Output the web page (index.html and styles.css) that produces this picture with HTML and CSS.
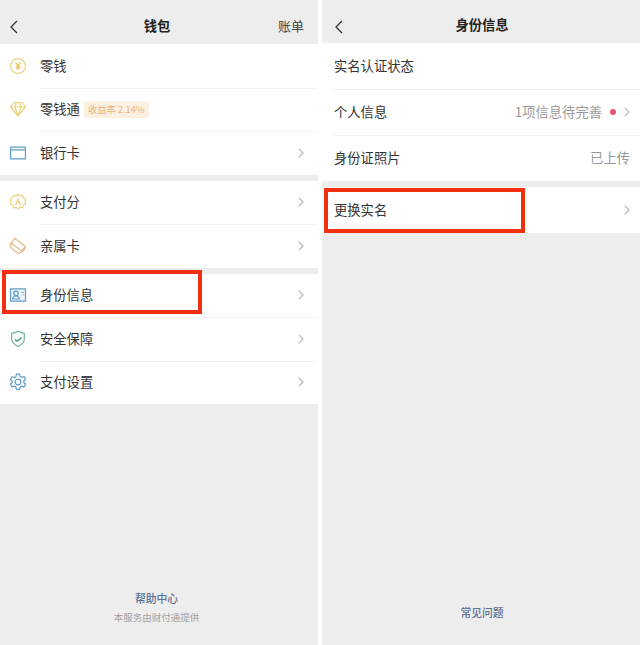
FILE: index.html
```html
<!DOCTYPE html>
<html lang="zh-CN">
<head>
<meta charset="utf-8">
<title>钱包 / 身份信息</title>
<link rel="stylesheet" href="styles.css">
</head>
<body>
<div class="screens">
  <section class="screen">
    <header class="nav nav-left">
      <svg class="back" viewBox="0 0 8 14"><path d="M7 1 1 7l6 6"/></svg>
      <h1 class="nav-title">钱包</h1>
      <span class="nav-action">账单</span>
    </header>
    <div class="group">
      <div class="row">
        <svg class="icon" viewBox="0 0 18 18"><circle class="yellow" cx="9" cy="9" r="7.400"/><path class="yellow-strong" d="M6.600 5.300 9 8.600l2.400-3.300M9 8.600v4.100M6.600 9.200h4.800M6.600 11h4.800"/></svg>
        <span class="label">零钱</span>
      </div>
      <div class="row">
        <svg class="icon" viewBox="0 0 18 18"><path class="yellow" d="M5 2.500h8L16.500 7 9 16 1.500 7zM1.500 7h15M5.800 7 9 16l3.200-9M5.800 7 7.500 2.500M12.200 7 10.500 2.500"/></svg>
        <span class="label">零钱通</span>
        <span class="badge">收益率 2.14%</span>
      </div>
      <div class="row">
        <svg class="icon" viewBox="0 0 18 18"><path class="blue" d="M1.600 3.200h14.800v11.600H1.600zM1.600 5.800h14.800"/></svg>
        <span class="label">银行卡</span>
        <svg class="chevron" viewBox="0 0 6 10"><path d="m.7.700 4.300 4.300-4.300 4.300"/></svg>
      </div>
    </div>
    <div class="group">
      <div class="row">
        <svg class="icon" viewBox="0 0 18 18"><path class="yellow" d="M9 1.200 11 2.700l2.500-.3 1 2.300 2.200 1.300-.6 2.500.6 2.500-2.200 1.300-1 2.300-2.500-.3-2 1.500-2-1.500-2.500.3-1-2.300-2.200-1.300.6-2.500-.6-2.500 2.200-1.300 1-2.300 2.500.3z"/><path class="yellow" d="m6.500 12.200 2.500-6.500 2.500 6.500M7.400 10h3.200"/></svg>
        <span class="label">支付分</span>
        <svg class="chevron" viewBox="0 0 6 10"><path d="m.7.700 4.300 4.300-4.300 4.300"/></svg>
      </div>
      <div class="row">
        <svg class="icon" viewBox="0 0 18 18"><path class="orange" d="M6 1.500 16.500 9.500 12.500 14 2 6zM2 6 1.200 8.800c0 1 .8 2.200 1.800 3l6 4.500c1.500 0 3-.5 4-1.500l3.500-3.500"/></svg>
        <span class="label">亲属卡</span>
        <svg class="chevron" viewBox="0 0 6 10"><path d="m.7.700 4.300 4.300-4.300 4.300"/></svg>
      </div>
    </div>
    <div class="group">
      <div class="row">
        <svg class="icon" viewBox="0 0 18 18"><path class="blue tint" d="M1.500 2.800h15v12.400h-15z"/><circle class="blue" cx="7" cy="7.400" r="2.300"/><path class="blue" d="M3.500 13c.3-2 1.700-3 3.500-3s3.200 1 3.500 3zM12.500 6.500h2.200M13.500 9h1.200"/></svg>
        <span class="label">身份信息</span>
        <svg class="chevron" viewBox="0 0 6 10"><path d="m.7.700 4.300 4.300-4.300 4.300"/></svg>
        <span class="highlight"></span>
      </div>
      <div class="row">
        <svg class="icon" viewBox="0 0 18 18"><path class="green" d="M9 1.300c2 1.300 4 1.900 6.300 2v6c0 3.400-2.900 5.600-6.300 7.200-3.400-1.600-6.300-3.800-6.300-7.200v-6c2.300-.1 4.300-.7 6.300-2z"/><path class="green-strong" d="m5.800 9.200 2.400 2L12.600 7.600"/></svg>
        <span class="label">安全保障</span>
        <svg class="chevron" viewBox="0 0 6 10"><path d="m.7.700 4.300 4.300-4.300 4.300"/></svg>
      </div>
      <div class="row">
        <svg class="icon" viewBox="0 0 18 18"><path class="blue" d="M7.400 1.200h3.200l.5 2.300 1.700.9 2.200-.9 1.600 2.700-1.700 1.600v1.900l1.700 1.600-1.600 2.700-2.200-.9-1.700.9-.5 2.300H7.400l-.5-2.300-1.700-.9-2.200.9-1.600-2.700 1.700-1.600V8l-1.700-1.600 1.600-2.700 2.200.9 1.700-.9z"/><circle class="blue" cx="9" cy="9" r="2.800"/></svg>
        <span class="label">支付设置</span>
        <svg class="chevron" viewBox="0 0 6 10"><path d="m.7.700 4.300 4.300-4.300 4.300"/></svg>
      </div>
    </div>
    <footer class="foot foot-left">
      <a class="foot-link">帮助中心</a>
      <p class="foot-note">本服务由财付通提供</p>
    </footer>
  </section>

  <section class="screen">
    <header class="nav nav-right">
      <svg class="back" viewBox="0 0 8 14"><path d="M7 1 1 7l6 6"/></svg>
      <h1 class="nav-title">身份信息</h1>
    </header>
    <div class="group">
      <div class="row row-tall"><span class="label">实名认证状态</span></div>
      <div class="row row-tall">
        <span class="label">个人信息</span>
        <span class="value">1项信息待完善</span>
        <span class="dot"></span>
        <svg class="chevron chevron-near" viewBox="0 0 6 10"><path d="m.7.700 4.300 4.300-4.300 4.300"/></svg>
      </div>
      <div class="row row-tall">
        <span class="label">身份证照片</span>
        <span class="value">已上传</span>
      </div>
    </div>
    <div class="group">
      <div class="row row-tall">
        <span class="label">更换实名</span>
        <svg class="chevron" viewBox="0 0 6 10"><path d="m.7.700 4.300 4.300-4.300 4.300"/></svg>
        <span class="highlight highlight-right"></span>
      </div>
    </div>
    <footer class="foot foot-right">
      <a class="foot-link">常见问题</a>
    </footer>
  </section>
</div>
</body>
</html>
```
FILE: styles.css
```css
* { box-sizing: border-box; margin: 0; padding: 0; }
html, body { height: 100%; background: #fff; }
body {
  font-family: "Noto Sans CJK SC", "Noto Sans", sans-serif;
  color: #333;
  font-size: 13.300px;
}
.screens {
  display: grid;
  grid-template-columns: 318px 318px;
  gap: 4px;
  height: 645px;
  overflow: hidden;
}
.screen {
  background: #ededed;
  display: flex;
  flex-direction: column;
  gap: 6px;
}
.nav {
  height: 44px;
  margin-bottom: -6px;
  display: flex;
  align-items: center;
  justify-content: center;
  position: relative;
  padding-top: 7px;
}
.nav-left { padding-right: 4px; }
.nav-right { height: 43px; padding-left: 2px; }
.nav-title { font-size: 13.300px; font-weight: 700; color: #222; line-height: 20px; }
.back {
  position: absolute;
  left: 10px;
  top: 20px;
  width: 8px;
  height: 14px;
}
.nav-right .back { left: 13px; }
.back path { fill: none; stroke: #333; stroke-width: 1.300; }
.nav-action {
  position: absolute;
  right: 14px;
  top: 16px;
  font-size: 13px;
  line-height: 20px;
  color: #444;
}
.group { background: #fff; }
.row {
  height: 43.500px;
  display: flex;
  align-items: center;
  position: relative;
  padding: 0 14px 0 9px;
}
.row + .row::before {
  content: "";
  position: absolute;
  left: 40px;
  right: 0;
  top: 0;
  height: 1px;
  background: #f3f3f3;
}
.row-tall { height: 46px; padding: 0 10px 0 12px; }
.row-tall + .row-tall::before { left: 12px; }
.icon { width: 18px; height: 18px; margin-right: 13px; flex: none; overflow: visible; }
.icon path, .icon circle { fill: none; stroke-width: 1.200; stroke-linejoin: round; }
.icon .yellow { stroke: #ecd27f; }
.icon .yellow-strong { stroke: #e9c866; stroke-width: 1.300; }
.icon .orange { stroke: #e6b98a; }
.icon .blue { stroke: #5f9cc8; }
.icon .tint { fill: #eef5fa; }
.icon .green { stroke: #6db292; }
.icon .green-strong { stroke: #4fa37e; stroke-width: 1.400; }
.label { color: #333; line-height: 20px; }
.badge {
  margin-left: 4px;
  background: #fcf0e3;
  color: #e8b77f;
  font-size: 9.300px;
  line-height: 17px;
  height: 17px;
  padding: 0 4px;
  border-radius: 3px;
}
.chevron {
  width: 6px;
  height: 10px;
  margin-left: auto;
  flex: none;
}
.chevron path { fill: none; stroke: #b5b5b5; stroke-width: 1.100; }
.chevron-near { margin-left: 8px; }
.value { margin-left: auto; color: #999; line-height: 20px; }
.dot {
  width: 6px;
  height: 6px;
  border-radius: 50%;
  background: #e2566b;
  margin-left: 8px;
}
.highlight {
  position: absolute;
  left: 2px;
  top: -4px;
  width: 200px;
  height: 44px;
  border: 4px solid #f2300f;
  pointer-events: none;
}
.highlight-right { left: 2px; top: 1px; width: 200.500px; height: 45px; }
.foot {
  margin-top: auto;
  text-align: center;
  padding-bottom: 20px;
}
.foot-left { padding-right: 5px; }
.foot-link { display: block; color: #5d6f94; font-size: 10.800px; font-weight: 500; line-height: 16px; }
.foot-note { color: #a2a2a2; font-size: 9.500px; line-height: 15px; margin-top: 4px; }
.foot-right { padding-bottom: 25px; padding-left: 2px; }
```
